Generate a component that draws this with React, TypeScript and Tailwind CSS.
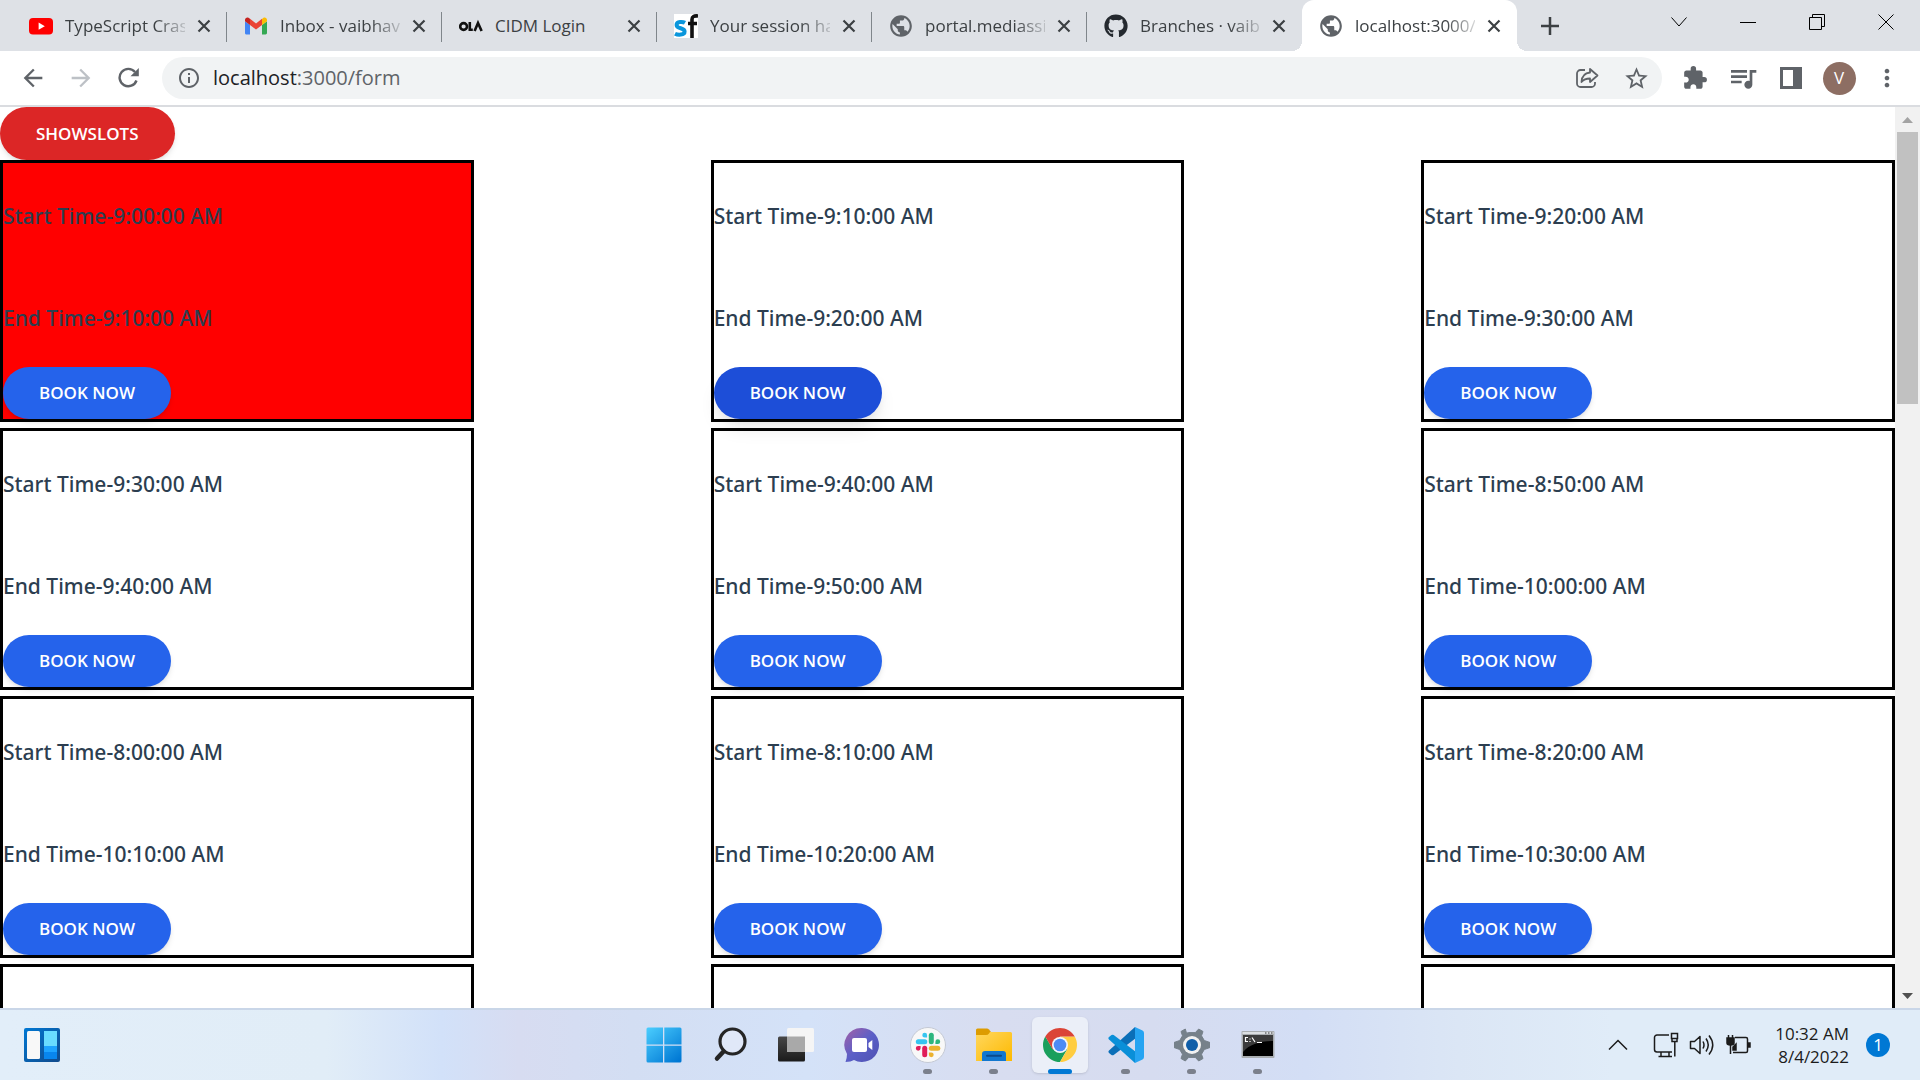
import React from "react";
import { FaGithub } from "react-icons/fa";
import {
  MdArrowBack,
  MdArrowForward,
  MdExtension,
  MdInfoOutline,
  MdMoreVert,
  MdOutlineQueueMusic,
  MdPublic,
  MdStarBorder,
} from "react-icons/md";

type Slot = { start: string; end: string; booked?: boolean; active?: boolean };

const slots: Slot[] = [
  { start: "9:00:00 AM", end: "9:10:00 AM", booked: true },
  { start: "9:10:00 AM", end: "9:20:00 AM", active: true },
  { start: "9:20:00 AM", end: "9:30:00 AM" },
  { start: "9:30:00 AM", end: "9:40:00 AM" },
  { start: "9:40:00 AM", end: "9:50:00 AM" },
  { start: "8:50:00 AM", end: "10:00:00 AM" },
  { start: "8:00:00 AM", end: "10:10:00 AM" },
  { start: "8:10:00 AM", end: "10:20:00 AM" },
  { start: "8:20:00 AM", end: "10:30:00 AM" },
];

/* ---------- Favicons ---------- */

function YouTubeIcon() {
  return (
    <svg viewBox="0 0 24 24" className="size-6">
      <rect x="0" y="4" width="24" height="16.500" rx="4" fill="#f00" />
      <path d="M9.600 8.600v7.200l6.200-3.600z" fill="#fff" />
    </svg>
  );
}

function GmailIcon() {
  return (
    <svg viewBox="0 0 24 24" className="size-6">
      <path d="M1.500 20.500H6V11L1 7.200v11.900c0 .8.500 1.400 1 1.400z" fill="#4285f4" />
      <path d="M18 20.500h3.500c.8 0 1.500-.6 1.500-1.400V7.200L18 11z" fill="#34a853" />
      <path d="M18 5v6l5-3.800V6c0-2-2.200-3.200-3.800-2z" fill="#fbbc04" />
      <path d="M6 11V4.800l6 4.600 6-4.600V11l-6 4.600z" fill="#ea4335" />
      <path d="M1 6v1.200L6 11V4.800L4.800 4C3.200 2.800 1 4 1 6z" fill="#c5221f" />
    </svg>
  );
}

function OlaIcon() {
  return (
    <svg viewBox="0 0 24 24" className="size-6" fill="none" stroke="#111" strokeWidth="2.600">
      <circle cx="4.600" cy="12.500" r="3.400" />
      <path d="M10.800 8v7.700h3" />
      <path d="M15.600 17l3.400-8 3.600 8" />
    </svg>
  );
}

function SuccessFactorsIcon() {
  return (
    <svg viewBox="0 0 24 24" className="size-6">
      <rect width="24" height="24" fill="#fff" />
      <path
        d="M11 8.800C9 7.600 2.600 7 2.600 11c0 4.300 8 2.300 8 6.500 0 4-7 3.500-9.600 2.200"
        fill="none"
        stroke="#0a96dc"
        strokeWidth="4"
      />
      <path d="M18 24V5.500C18 2.500 20 1.600 24 2M14 9.500h9" fill="none" stroke="#111" strokeWidth="3.600" />
    </svg>
  );
}

function CloseGlyph() {
  return (
    <svg viewBox="0 0 14 14" className="size-3.5" stroke="#3c4043" strokeWidth="2.200">
      <path d="M1.500 1.500l11 11M12.500 1.500l-11 11" />
    </svg>
  );
}

const tabs = [
  { title: "TypeScript Cras", icon: <YouTubeIcon /> },
  { title: "Inbox - vaibhav", icon: <GmailIcon /> },
  { title: "CIDM Login", icon: <OlaIcon />, short: true },
  { title: "Your session ha", icon: <SuccessFactorsIcon /> },
  { title: "portal.mediassi", icon: <MdPublic className="-m-px size-[26px] text-[#5f6368]" /> },
  { title: "Branches · vaib", icon: <FaGithub className="size-6 text-[#24292f]" /> },
  { title: "localhost:3000/", icon: <MdPublic className="-m-px size-[26px] text-[#5f6368]" />, active: true },
];

function TabStrip() {
  return (
    <header className="flex h-[51px] shrink-0 bg-[#dee1e6] pl-3">
      <div className="flex min-w-0">
        {tabs.map((tab, i) => (
          <div
            key={tab.title}
            className={
              tab.active
                ? "relative flex w-[215px] items-center rounded-t-xl bg-white pr-4 pl-[17px]"
                : "relative flex w-[215px] items-center pr-4 pl-[17px]"
            }
          >
            {tab.active && (
              <>
                <span className="absolute bottom-0 -left-2.5 size-2.5 bg-[radial-gradient(circle_at_0_0,transparent_10px,white_10px)]" />
                <span className="absolute -right-2.5 bottom-0 size-2.5 bg-[radial-gradient(circle_at_100%_0,transparent_10px,white_10px)]" />
              </>
            )}
            {!tab.active && i < tabs.length - 2 && (
              <span className="absolute top-3 right-0 h-[30px] w-px bg-[#80868b]" />
            )}
            <span className="shrink-0">{tab.icon}</span>
            <button
              type="button"
              className={
                tab.short
                  ? "ml-3 min-w-0 flex-1 text-left text-[17px] leading-6 whitespace-nowrap text-[#3c4043]"
                  : "ml-3 min-w-0 flex-1 text-left text-[17px] leading-6 whitespace-nowrap text-[#3c4043] [mask-image:linear-gradient(to_right,black_75%,#0003)]"
              }
            >
              {tab.title}
            </button>
            <button type="button" aria-label="Close tab" className="ml-3 shrink-0">
              <CloseGlyph />
            </button>
          </div>
        ))}
      </div>
      <button type="button" aria-label="New tab" className="ml-6 self-center">
        <svg viewBox="0 0 18 18" className="size-[18px]" stroke="#3c4043" strokeWidth="2.500">
          <path d="M9 0v18M0 9h18" />
        </svg>
      </button>
      <div className="ml-auto flex h-[43px] text-black">
        <button type="button" aria-label="Search tabs" className="grid w-[68px] place-items-center">
          <svg viewBox="0 0 16 16" className="size-4" fill="none" stroke="currentColor" strokeWidth="1">
            <path d="M.5 3.500L8 12l7.500-8.500" />
          </svg>
        </button>
        <button type="button" aria-label="Minimize" className="grid w-[69px] place-items-center">
          <svg viewBox="0 0 16 16" className="size-4" stroke="currentColor" strokeWidth="1">
            <path d="M0 8.500h16" />
          </svg>
        </button>
        <button type="button" aria-label="Restore" className="grid w-[69px] place-items-center">
          <svg viewBox="0 0 16 16" className="size-4" fill="none" stroke="currentColor" strokeWidth="1">
            <path d="M.5 3.500h12v12H.5zM3.500 3.500v-3h12v12h-3" />
          </svg>
        </button>
        <button type="button" aria-label="Close" className="grid w-[69px] place-items-center">
          <svg viewBox="0 0 16 16" className="size-4" stroke="currentColor" strokeWidth="1">
            <path d="M.5.500l15 15M15.500.500l-15 15" />
          </svg>
        </button>
      </div>
    </header>
  );
}

function Toolbar() {
  const cell = "grid h-12 w-12 shrink-0 place-items-center text-[#5f6368]";
  return (
    <nav className="flex h-14 shrink-0 items-center border-b-2 border-[#dadce0] bg-white px-[9px]">
      <button type="button" aria-label="Back" className={cell}>
        <MdArrowBack className="size-[28px]" />
      </button>
      <button type="button" aria-label="Forward" disabled className="grid h-12 w-12 shrink-0 place-items-center text-[#bdc1c6]">
        <MdArrowForward className="size-[28px]" />
      </button>
      <button type="button" aria-label="Reload" className={cell}>
        <svg viewBox="0 0 22 22" className="size-[22px]">
          <path d="M18.500 13.500A8.700 8.700 0 1 1 17 5" fill="none" stroke="currentColor" strokeWidth="2.400" />
          <path d="M20.800 1v8.300h-8.300z" fill="currentColor" />
        </svg>
      </button>
      <div className="mx-[9px] flex h-[42px] min-w-0 flex-1 items-center rounded-full bg-[#f1f3f4] pr-3 pl-[15px]">
        <MdInfoOutline className="size-6 shrink-0 text-[#5f6368]" />
        <a href="#form" className="ml-3 flex-1 text-xl leading-7 whitespace-nowrap text-[#5f6368]">
          <span className="text-[#202124]">localhost</span>:3000/form
        </a>
        <button type="button" aria-label="Share this page" className="mr-6">
          <svg viewBox="0 0 24 24" className="size-6" fill="none" stroke="#5f6368" strokeWidth="1.800">
            <path d="M10 4H5.500A3.500 3.500 0 0 0 2 7.500v10A3.500 3.500 0 0 0 5.500 21h11a3.500 3.500 0 0 0 3.500-3.500V16" />
            <path d="M15 3l7.500 6.500L15 16v-3.500c-4 0-6.500 1-8.500 3.500.3-5 3-9 8.500-9.500z" strokeLinejoin="round" />
          </svg>
        </button>
        <button type="button" aria-label="Bookmark this tab">
          <MdStarBorder className="size-[27px] text-[#5f6368]" />
        </button>
      </div>
      <button type="button" aria-label="Extensions" className={cell}>
        <MdExtension className="size-[26px]" />
      </button>
      <button type="button" aria-label="Media controls" className={cell}>
        <MdOutlineQueueMusic className="size-8" />
      </button>
      <button type="button" aria-label="Side panel" className={cell}>
        <svg viewBox="0 0 22 22" className="size-[22px]">
          <path d="M0 0h22v22H0zM3 3v16h10V3z" fill="currentColor" fillRule="evenodd" />
        </svg>
      </button>
      <button type="button" aria-label="Profile" className={cell}>
        <span className="grid size-[33px] place-items-center rounded-full bg-[#8d6e63] text-[17px] leading-5 text-white">V</span>
      </button>
      <button type="button" aria-label="Menu" className={cell}>
        <MdMoreVert className="size-7" />
      </button>
    </nav>
  );
}

function SlotCard({ start, end, booked, active }: Slot) {
  return (
    <article className={booked ? "border-[3px] border-black bg-[#ff0000]" : "border-[3px] border-black"}>
      <p className="pt-9 pb-8 font-['Noto_Sans',sans-serif] text-[21px] leading-[34px] font-medium text-[#2c3e50]">
        Start Time-{start}
      </p>
      <p className="pt-9 pb-8 font-['Noto_Sans',sans-serif] text-[21px] leading-[34px] font-medium text-[#2c3e50]">
        End Time-{end}
      </p>
      <button
        type="button"
        className={
          active
            ? "block h-[52px] rounded-full bg-[#1d4ed8] px-9 text-[17px] font-semibold text-white shadow-[0_12px_19px_-4px_rgb(0_0_0/0.1),0_5px_8px_-2px_rgb(0_0_0/0.05)]"
            : "block h-[52px] rounded-full bg-[#2563eb] px-9 text-[17px] font-semibold text-white shadow-md"
        }
      >
        BOOK NOW
      </button>
    </article>
  );
}

function Scrollbar() {
  return (
    <div aria-hidden="true" className="flex w-[25px] shrink-0 flex-col items-center bg-[#f1f1f1]">
      <svg viewBox="0 0 25 25" className="size-[25px] shrink-0" fill="#a3a3a3">
        <path d="M7 16h11l-5.500-6z" />
      </svg>
      <div className="h-[272px] w-[21px] bg-[#c1c1c1]" />
      <svg viewBox="0 0 25 25" className="mt-auto size-[25px] shrink-0" fill="#505050">
        <path d="M7 10h11l-5.500 6z" />
      </svg>
    </div>
  );
}

/* ---------- Taskbar ---------- */

function WidgetsIcon() {
  return (
    <svg viewBox="0 0 36 40" className="h-10 w-9">
      <defs>
        <linearGradient id="wg" x1="0" y1="0" x2="1" y2="1">
          <stop offset="0" stopColor="#0078d4" />
          <stop offset="1" stopColor="#114a8b" />
        </linearGradient>
      </defs>
      <rect y="3" width="36" height="34" rx="2" fill="url(#wg)" />
      <rect x="3" y="6" width="13" height="28" rx="1.500" fill="#f8f8f8" />
      <path d="M20 6h13v15H20z" fill="#69dcff" />
      <path d="M20 21h13v6H20z" fill="#1ea4ff" />
      <path d="M20 27h13v7H20z" fill="#0886ee" />
    </svg>
  );
}

function StartIcon() {
  return (
    <svg viewBox="0 0 36 36" className="size-9">
      <defs>
        <linearGradient id="st" gradientUnits="userSpaceOnUse" x1="0" y1="0" x2="30" y2="36">
          <stop offset="0" stopColor="#4ccfff" />
          <stop offset="1" stopColor="#0078d4" />
        </linearGradient>
      </defs>
      <path d="M.5 2Q.5.500 2 .5h15v17H.5zM18.300.500H34q1.500 0 1.500 1.500v15.500H18.300zM.5 18.700H17v16.800H2Q.5 35.500.5 34zM18.300 18.700h17.200V34q0 1.500-1.500 1.500H18.300z" fill="url(#st)" />
    </svg>
  );
}

function SearchIcon() {
  return (
    <svg viewBox="0 0 36 36" className="size-9" fill="none" stroke="#252525" strokeLinecap="round">
      <circle cx="20.500" cy="14.500" r="12.500" fill="#e0e8f8" strokeWidth="3.200" />
      <path d="M11.500 24.500L5 31.500" strokeWidth="4.500" />
    </svg>
  );
}

function TaskViewIcon() {
  return (
    <svg viewBox="0 0 36 36" className="size-9">
      <defs>
        <linearGradient id="tv" x1="0" y1="0" x2="0" y2="1">
          <stop offset="0" stopColor="#484848" />
          <stop offset="1" stopColor="#1b1b1b" />
        </linearGradient>
      </defs>
      <rect x="0" y="9.500" width="27" height="25" rx="1.500" fill="url(#tv)" />
      <rect x="9" y="1" width="27" height="24" rx="1.500" fill="#f5f5f5" />
      <path d="M9 9.500h18V25H9z" fill="#a9a9a9" />
    </svg>
  );
}

function ChatIcon() {
  return (
    <svg viewBox="0 0 36 36" className="size-9">
      <defs>
        <linearGradient id="ch" x1="0" y1="0" x2="1" y2="1">
          <stop offset="0" stopColor="#a660a6" />
          <stop offset=".5" stopColor="#5b5fc7" />
          <stop offset="1" stopColor="#4f52b2" />
        </linearGradient>
      </defs>
      <path d="M18 1a17 17 0 1 1-8 32q-3 2-8.500 2 1.500-4 1.500-8A17 17 0 0 1 18 1z" fill="url(#ch)" />
      <rect x="8" y="11" width="15" height="14" rx="2" fill="#fff" />
      <path d="M24.500 16l3.800-3v10l-3.800-3z" fill="#fff" />
    </svg>
  );
}

function SlackIcon() {
  return (
    <svg viewBox="0 0 36 36" className="size-9" strokeWidth="5" strokeLinecap="round">
      <circle cx="18" cy="18" r="17.500" fill="#f8f8f8" stroke="#c4c9d4" strokeWidth="1" />
      <path d="M8.300 14.700h6.500" stroke="#36c5f0" />
      <path d="M21.300 8.300v6.500" stroke="#2eb67d" />
      <path d="M21.300 21.300h6.500" stroke="#ecb22e" />
      <path d="M14.700 21.300v6.500" stroke="#e01e5a" />
      <path d="M14.700 5.800a2.400 2.400 0 0 1 2.400 2.400v2.400h-2.400a2.400 2.400 0 0 1 0-4.800z" fill="#36c5f0" />
      <path d="M30.200 14.700a2.400 2.400 0 0 1-2.400 2.400h-2.400v-2.400a2.400 2.400 0 0 1 4.800 0z" fill="#2eb67d" />
      <path d="M21.300 30.200a2.400 2.400 0 0 1-2.400-2.400v-2.400h2.400a2.400 2.400 0 0 1 0 4.800z" fill="#ecb22e" />
      <path d="M5.800 21.300a2.400 2.400 0 0 1 2.400-2.400h2.400v2.400a2.400 2.400 0 0 1-4.800 0z" fill="#e01e5a" />
    </svg>
  );
}

function ExplorerIcon() {
  return (
    <svg viewBox="0 0 36 36" className="size-9">
      <defs>
        <linearGradient id="ex" x1="0" y1="0" x2="1" y2="1">
          <stop offset="0" stopColor="#ffd75e" />
          <stop offset="1" stopColor="#fdb900" />
        </linearGradient>
      </defs>
      <path d="M0 8V3q0-1.500 1.500-1.500H11q1 0 2 1L15 5v5H0z" fill="#dd9c00" />
      <path d="M0 8h10q2 0 3-1.500l1-1.500h20.500Q36 5 36 6.500V34H0z" fill="url(#ex)" />
      <path d="M6 34V27q0-3 3-3h18q3 0 3 3v7z" fill="#1277cf" />
      <path d="M11 28.800h14" stroke="#0c4a8a" strokeWidth="2" strokeLinecap="round" />
    </svg>
  );
}

function ChromeIcon() {
  return (
    <svg viewBox="0 0 36 36" className="size-9">
      <path d="M10.800 22.200L3.280 9.500A17 17 0 0 0 18 35l7.200-12.800z" fill="#1a9f5c" />
      <path d="M18 9.500h14.720A17 17 0 0 1 18 35l7.400-12.700z" fill="#ffcd40" />
      <path d="M3.280 9.500A17 17 0 0 1 32.720 9.500H18l-7.400 12.700z" fill="#db4437" />
      <circle cx="18" cy="18" r="8" fill="#f4f6fb" />
      <circle cx="18" cy="18" r="6.300" fill="#4c8bf5" />
    </svg>
  );
}

function CodeIcon() {
  return (
    <svg viewBox="0 0 36 36" className="size-9">
      <path d="M27 0L1 23.500Q-.2 24.800 1 26l2.500 2q1 .7 2.200 0L28 11z" fill="#0b6fb8" />
      <path d="M27 36L1 12.500Q-.2 11.200 1 10l2.500-2q1-.7 2.200 0L28 25z" fill="#0a8fd8" />
      <path d="M27 0l7.500 3.500Q36 4.300 36 6v24q0 1.700-1.500 2.500L27 36z" fill="#26a4f2" />
    </svg>
  );
}

function SettingsIcon() {
  return (
    <svg viewBox="0 0 36 36" className="size-9">
      <path
        d="M12.500 6.200L11.300 2 7 4.500l1.500 4.300-2.800 4.700L0 15.500v5l5.700 2 2.800 4.700L7 31.500l4.300 2.500 3.400-3.600h6.600l3.400 3.600 4.300-2.500-1.500-4.300 2.800-4.700 5.700-2v-5l-5.700-2-2.800-4.700L29 4.500 24.700 2l-3.400 3.600h-6.600z"
        fill="#76818a"
        stroke="#76818a"
        strokeLinejoin="round"
      />
      <circle cx="18" cy="18" r="9" fill="#f1f1f1" />
      <circle cx="18" cy="18" r="6" fill="#0f5ea8" />
    </svg>
  );
}

function TerminalIcon() {
  return (
    <svg viewBox="0 0 36 36" className="size-9">
      <rect x="1.500" y="4" width="33" height="27" rx="1" fill="#a9adb0" />
      <path d="M2.500 5h31v2h-31z" fill="#dcdfe2" />
      <path d="M3 8h30v21H3z" fill="#000" />
      <path d="M3 8h30v6Q12 14 3 25z" fill="#3c3c3c" />
      <path
        d="M8 10.500H5.500v4H8M10 11.500v1M10 14v1M12 10.500l3 4.500M17 15.500h5"
        fill="none"
        stroke="#fff"
        strokeWidth="1.200"
      />
      <path d="M25 6h1.500M28 6h1.500M31 6h1.500" stroke="#333" strokeWidth="1" />
    </svg>
  );
}

const apps = [
  { name: "Start", icon: <StartIcon /> },
  { name: "Search", icon: <SearchIcon /> },
  { name: "Task view", icon: <TaskViewIcon /> },
  { name: "Chat", icon: <ChatIcon /> },
  { name: "Slack", icon: <SlackIcon />, running: true },
  { name: "File Explorer", icon: <ExplorerIcon />, running: true },
  { name: "Chrome", icon: <ChromeIcon />, active: true },
  { name: "Code", icon: <CodeIcon />, running: true },
  { name: "Settings", icon: <SettingsIcon />, running: true },
  { name: "Terminal", icon: <TerminalIcon />, running: true },
];

function Taskbar() {
  return (
    <footer className="grid h-[72px] shrink-0 grid-cols-[1fr_auto_1fr] items-center border-t-2 border-[#c9d6e8] bg-[linear-gradient(90deg,#e2eef9_0%,#e1edf7_17%,#d2e1f9_23%,#d7dcf1_27%,#d3def3_33%,#d4e2f8_42%,#d8ddf0_52%,#d6dcf0_60%,#d3def5_68%,#dbe6f5_76%,#e0ecf8_84%,#e0ecf8_100%)]">
      <button type="button" aria-label="Widgets" className="ml-6 justify-self-start">
        <WidgetsIcon />
      </button>
      <div className="flex pl-px">
        {apps.map((app) => (
          <div key={app.name} className="grid w-[66px] place-items-center">
            <button
              type="button"
              aria-label={app.name}
              className={
                app.active
                  ? "relative grid size-14 place-items-center rounded-md bg-[#ebeff8] shadow-sm"
                  : "relative grid size-14 place-items-center"
              }
            >
              {app.icon}
              {app.running && <span className="absolute -bottom-px h-[5px] w-[9px] rounded-full bg-[#7b808c]" />}
              {app.active && <span className="absolute -bottom-px h-[5px] w-6 rounded-full bg-[#0078d4]" />}
            </button>
          </div>
        ))}
      </div>
      <div className="flex items-center justify-self-end pr-[30px] text-[#1b1b1b]">
        <button type="button" aria-label="Show hidden icons">
          <svg viewBox="0 0 20 20" className="size-5" fill="none" stroke="currentColor" strokeWidth="1.500">
            <path d="M1 14.500l9-9 9 9" />
          </svg>
        </button>
        <svg viewBox="0 0 26 26" className="ml-[25px] size-[26px]" fill="none" stroke="currentColor" strokeWidth="1.500">
          <path d="M16 3H4a2.500 2.500 0 0 0-2.500 2.500v12A2.500 2.500 0 0 0 4 20h15M8 20v4M16 20v4M5.500 24.500H19" />
          <path d="M18.500 1.500h6v5h-6zM19 6.500v3h5v-3M21.800 10v14.500" />
        </svg>
        <svg viewBox="0 0 26 26" className="ml-2.5 size-[26px]" fill="none" stroke="currentColor" strokeWidth="1.500">
          <path d="M1.500 9.500v7h4l5.500 5V4.500l-5.500 5zM14 9.500q2 3.500 0 7M17 6.500q4.500 6.500 0 13M20 3.500q7.500 9.500 0 19" strokeLinejoin="round" />
        </svg>
        <svg viewBox="0 0 26 26" className="ml-2.5 size-[26px]" fill="none" stroke="currentColor" strokeWidth="1.500">
          <path d="M10 5.500h11a1.500 1.500 0 0 1 1.500 1.500v12a1.500 1.500 0 0 1-1.500 1.500H8M5.500 10v12" />
          <path d="M2 6h7v5q0 2-3.500 2T2 11zM3.500 3v3M7.500 3v3M11 12v6H8v-3zM23 11h2v4h-2z" fill="currentColor" />
        </svg>
        <time className="ml-6 text-right text-[17px] leading-[23px]">
          10:32 AM
          <br />
          8/4/2022
        </time>
        <button type="button" aria-label="1 notification" className="ml-[17px] grid size-6 place-items-center rounded-full bg-[#0078d4] text-[17px] leading-5 text-white">
          1
        </button>
      </div>
    </footer>
  );
}

export default function App() {
  return (
    <div className="flex h-screen flex-col overflow-hidden bg-white font-['Open_Sans','Noto_Sans',sans-serif]">
      <TabStrip />
      <Toolbar />
      <div className="flex min-h-0 flex-1">
        <main className="min-w-0 flex-1 overflow-hidden">
          <button type="button" className="block h-[53px] rounded-full bg-[#dc2626] px-9 text-[17px] font-semibold text-white shadow-md">
            SHOWSLOTS
          </button>
          <section className="grid grid-cols-3 gap-x-[12.5%] gap-y-1.5">
            {slots.map((slot) => (
              <SlotCard key={slot.start} {...slot} />
            ))}
            <article className="h-[262px] border-[3px] border-black" />
            <article className="h-[262px] border-[3px] border-black" />
            <article className="h-[262px] border-[3px] border-black" />
          </section>
        </main>
        <Scrollbar />
      </div>
      <Taskbar />
    </div>
  );
}
